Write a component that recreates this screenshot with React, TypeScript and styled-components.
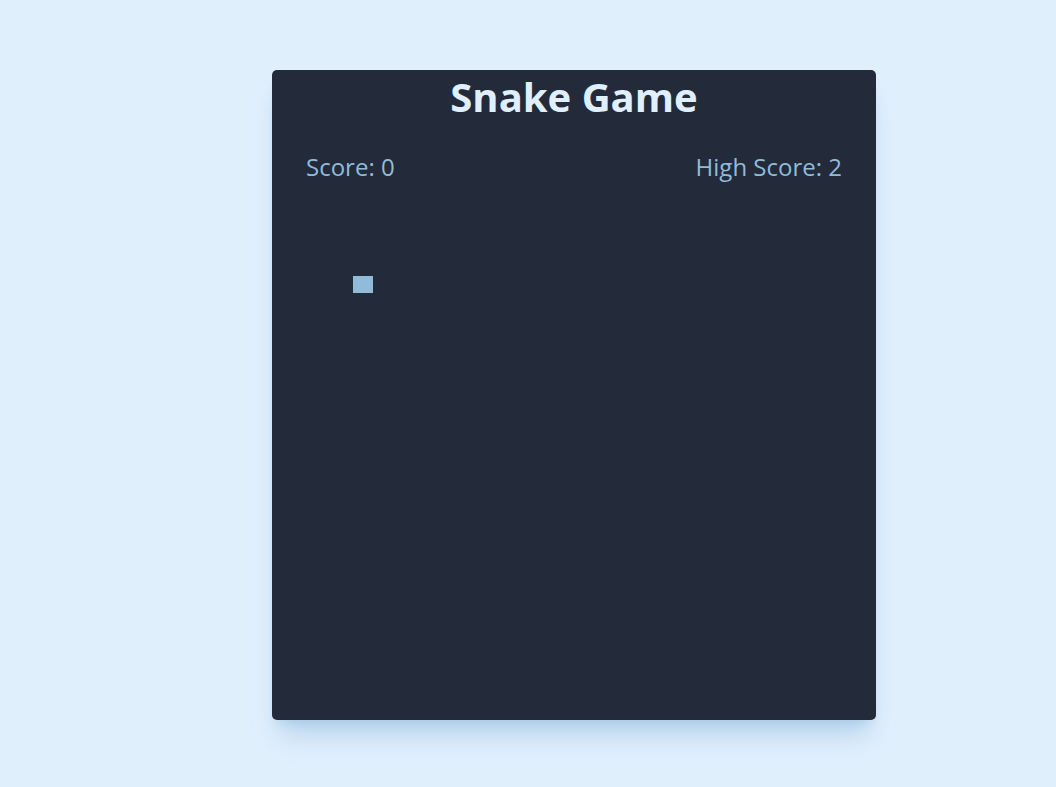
import React from "react";
import styled, { createGlobalStyle } from "styled-components";

const Global = createGlobalStyle`
  html, body { margin: 0; padding: 0; }
  body {
    background: #e0effc;
    font-family: "Open Sans", "Noto Sans", sans-serif;
    min-height: 787px;
  }
`;

const Page = styled.main`
  display: flex;
  align-items: flex-start;
  padding: 70px 0 0 272px;
`;

const Card = styled.section`
  width: 604px;
  height: 650px;
  box-sizing: border-box;
  background: #232a3a;
  border-radius: 5px;
  box-shadow: 0 22px 24px -8px rgba(120, 170, 215, 0.4),
    0 8px 10px -6px rgba(120, 170, 215, 0.3);
  display: flex;
  flex-direction: column;
`;

const Title = styled.h1`
  margin: 0;
  font-size: 40px;
  font-weight: 700;
  line-height: 54px;
  text-align: center;
  color: #e0effd;
`;

const ScoreRow = styled.div`
  display: flex;
  justify-content: space-between;
  padding: 0 34px;
  margin-top: 26px;
`;

const ScoreText = styled.span`
  font-size: 24px;
  line-height: 33px;
  color: #90bcd9;
`;

const Board = styled.div`
  position: relative;
  flex: 1;
`;

const Cell = styled.div`
  position: absolute;
  width: 20px;
  height: 17px;
  background: #90bcd9;
`;

export default function App() {
  const snake = [{ x: 81, y: 93 }];
  return (
    <>
      <Global />
      <Page>
        <Card>
          <Title>Snake Game</Title>
          <ScoreRow>
            <ScoreText>Score: 0</ScoreText>
            <ScoreText>High Score: 2</ScoreText>
          </ScoreRow>
          <Board>
            {snake.map((s, i) => (
              <Cell key={i} style={{ left: s.x, top: s.y }} />
            ))}
          </Board>
        </Card>
      </Page>
    </>
  );
}
